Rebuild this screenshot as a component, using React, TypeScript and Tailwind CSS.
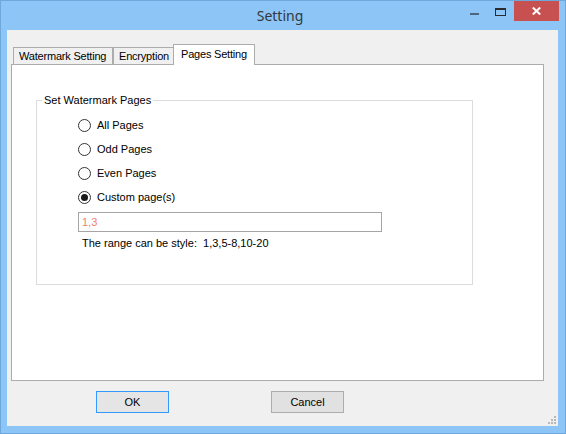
import type { FC } from "react";

/**
 * Setting ダイアログ（Pages Setting タブ）
 */

const body = "font-['Liberation_Sans',Arial,sans-serif] text-[11px] leading-[13px] text-black";

const RadioRow: FC<{ label: string; checked?: boolean }> = ({ label, checked = false }) => (
	<div className="flex h-[24px] items-center">
		<span className="flex h-[13px] w-[13px] items-center justify-center rounded-full border border-[#333333] bg-white">
			{checked && <span className="h-[7px] w-[7px] rounded-full bg-[#1a1a1a]" />}
		</span>
		<span className="ml-[6px]">{label}</span>
	</div>
);

const TitleBar: FC = () => (
	<div className="flex h-[29px] items-start">
		<div className="flex-1" />
		<div className="pt-[5px] font-['Noto_Sans',sans-serif] text-[14px] leading-[20px] text-[#333840]">
			Setting
		</div>
		<div className="flex flex-1 justify-end pr-[6px]">
			{/* minimize */}
			<div className="flex h-[20px] w-[26px] items-center justify-center">
				<span className="mt-[6px] h-[2px] w-[9px] bg-[#4a6680]" />
			</div>
			{/* maximize */}
			<div className="flex h-[20px] w-[27px] items-center justify-center">
				<span className="mt-[2px] h-[8px] w-[11px] border border-t-2 border-[#2c2c2c]" />
			</div>
			{/* close */}
			<div className="flex h-[20px] w-[45px] items-center justify-center bg-[#c75050]">
				<svg width="9" height="8" viewBox="0 0 9 8">
					<path d="M0.8 0.5 L8.2 7.5 M8.2 0.5 L0.8 7.5" stroke="#ffffff" strokeWidth="2" />
				</svg>
			</div>
		</div>
	</div>
);

const Tabs: FC = () => (
	<div className="relative z-10 ml-[6px] mt-[14px] flex h-[21px] items-end">
		<div className="flex h-[18px] w-[100px] items-center border border-[#acacac] bg-[#f0f0f0] pl-[5px] tracking-[-0.2px]">
			Watermark Setting
		</div>
		<div className="flex h-[18px] w-[61px] items-center border border-[#acacac] bg-[#f0f0f0] pl-[5px] tracking-[-0.2px]">
			Encryption
		</div>
		<div className="-ml-px flex h-[21px] w-[82px] items-start border border-b-0 border-[#acacac] bg-white pl-[7px] pt-[3px] tracking-[-0.2px]">
			Pages Setting
		</div>
	</div>
);

export default function App() {
	return (
		<div className={`${body} flex h-[434px] w-[566px] flex-col border border-[#6ea7dc] bg-[#8cc5f6]`}>
			<TitleBar />

			{/* client area */}
			<div className="relative ml-[6px] h-[396px] w-[551px] bg-[#f0f0f0]">
				<Tabs />

				{/* tab page */}
				<div className="-mt-px ml-[4px] h-[317px] w-[533px] border border-[#acacac] bg-white pt-[29px]">
					<fieldset className="ml-[24px] h-[191px] w-[437px] border border-[#dcdcdc] p-0">
						<legend className="ml-[5px] px-[2px]">Set Watermark Pages</legend>
						<div className="pl-[41px] pt-[6px]">
							<RadioRow label="All Pages" />
							<RadioRow label="Odd Pages" />
							<RadioRow label="Even Pages" />
							<RadioRow label="Custom page(s)" checked />
							<div className="mt-[3px] flex h-[20px] w-[304px] items-center border border-[#a5a5a5] bg-white pl-[3px] text-[#f08070]">
								1,3
							</div>
							<div className="ml-[4px] mt-[5px] whitespace-pre">
								The range can be style:  1,3,5-8,10-20
							</div>
						</div>
					</fieldset>
				</div>

				{/* buttons */}
				<div className="mt-[10px] flex">
					<button
						type="button"
						className="ml-[89px] h-[22px] w-[73px] border border-[#3399ff] bg-[#e5e5e5]"
					>
						OK
					</button>
					<button
						type="button"
						className="ml-[102px] h-[22px] w-[73px] border border-[#adadad] bg-[#e1e1e1]"
					>
						Cancel
					</button>
				</div>

				{/* resize grip */}
				<div className="absolute bottom-[2px] right-[2px] grid grid-cols-3 gap-[1px]">
					<span className="h-[2px] w-[2px]" />
					<span className="h-[2px] w-[2px]" />
					<span className="h-[2px] w-[2px] bg-[#b8b8b8]" />
					<span className="h-[2px] w-[2px]" />
					<span className="h-[2px] w-[2px] bg-[#b8b8b8]" />
					<span className="h-[2px] w-[2px] bg-[#b8b8b8]" />
					<span className="h-[2px] w-[2px] bg-[#b8b8b8]" />
					<span className="h-[2px] w-[2px] bg-[#b8b8b8]" />
					<span className="h-[2px] w-[2px] bg-[#b8b8b8]" />
				</div>
			</div>
		</div>
	);
}
